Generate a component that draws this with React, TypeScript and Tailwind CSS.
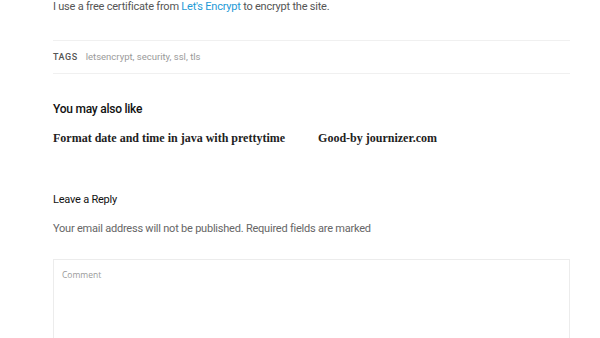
export default function App() {
  return (
    <div className="w-[600px] h-[338px] overflow-hidden bg-white font-['Roboto',sans-serif]">
      <div className="ml-[53px] w-[517px]">
        <p className="text-[11px] leading-[13px] tracking-[-0.02em] text-[#555]">
          I use a free certificate from{" "}
          <a className="text-[#1e9ad6]">Let's Encrypt</a> to encrypt the site.
        </p>

        <div className="mt-[27px] border-t border-b border-[#f0f0f0] h-[34px] flex items-center gap-[8px]">
          <span className="text-[9px] leading-[12px] font-medium tracking-[0.06em] text-[#555]">TAGS</span>
          <span className="text-[9.5px] leading-[12px] text-[#9a9a9a]">letsencrypt, security, ssl, tls</span>
        </div>

        <h3 className="mt-[27px] text-[12px] leading-[16px] tracking-[-0.02em] font-medium text-[#111]">
          You may also like
        </h3>

        <div className="mt-[13px] flex gap-[33px] font-['Liberation_Serif',serif] font-bold text-[12px] leading-[16px] text-[#222]">
          <span>Format date and time in java with prettytime</span>
          <span>Good-by journizer.com</span>
        </div>

        <h3 className="mt-[46px] text-[11px] leading-[16px] tracking-[-0.02em] text-[#111]">Leave a Reply</h3>
        <p className="mt-[13px] text-[11px] leading-[16px] tracking-[-0.02em] text-[#666]">
          Your email address will not be published. Required fields are marked
        </p>

        <div className="mt-[22px] h-[100px] border border-[#ececec] px-[8px] pt-[9px]">
          <p className="font-['Open_Sans',sans-serif] text-[8.5px] leading-[12px] text-[#9a9a9a]">Comment</p>
        </div>
      </div>
    </div>
  );
}
